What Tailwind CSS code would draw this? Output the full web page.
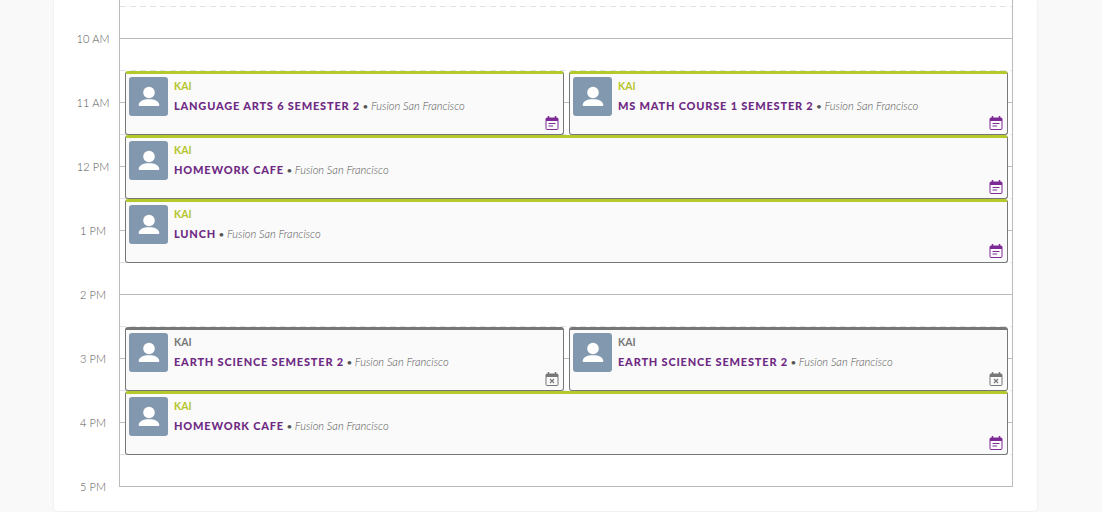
<!DOCTYPE html>
<html>
<head>
  <meta charset="utf-8">
  <script src="https://cdn.jsdelivr.net/npm/@tailwindcss/browser@4"></script>
</head>
<body class="h-[512px] overflow-hidden bg-[#f9f9f9] font-['Lato',sans-serif]">
  <svg class="hidden">
    <symbol id="avatar" viewBox="0 0 39 39">
      <circle cx="20" cy="15.500" r="5.800" fill="#fff"/>
      <path d="M10.500 29a1 1 0 0 1-0.800-1.200c0.500-3.500 4-5.500 10.300-5.500s9.800 2 10.300 5.500a1 1 0 0 1-0.800 1.200z" fill="#fff"/>
    </symbol>
    <symbol id="cal" viewBox="0 0 14 14">
      <path d="M3.500 0v2M10.500 0v2" stroke="currentColor" stroke-width="1.500"/>
      <rect x="1" y="2" width="12" height="11.500" rx="1" fill="#fafafa" stroke="currentColor"/>
      <rect x="1" y="2" width="12" height="3" fill="currentColor"/>
      <path d="M3.500 7.500h7M3.500 10h4.500" stroke="currentColor" stroke-width="1.200"/>
    </symbol>
    <symbol id="cal-x" viewBox="0 0 14 14">
      <path d="M3.500 0v2M10.500 0v2" stroke="currentColor" stroke-width="1.500"/>
      <rect x="1" y="2" width="12" height="11.500" rx="1" fill="#fafafa" stroke="currentColor"/>
      <rect x="1" y="2" width="12" height="3" fill="currentColor"/>
      <path d="M5 7l4 4M9 7l-4 4" stroke="currentColor" stroke-width="1.200"/>
    </symbol>
  </svg>

  <div class="ml-[54px] h-[511px] w-[983px] overflow-hidden rounded-b-[4px] bg-white shadow-[0_0_3px_rgba(0,0,0,0.08)]">
    <div class="flex items-start -translate-y-[26px]">
      <!-- hour labels -->
      <div class="w-[65px] shrink-0 pt-[57px] pl-[13px] text-center text-[11px] leading-[16px] font-light tracking-[0.1px] text-[#555]">
        <div class="h-[64px]">10 AM</div>
        <div class="h-[64px]">11 AM</div>
        <div class="h-[64px]">12 PM</div>
        <div class="h-[64px]">1 PM</div>
        <div class="h-[64px]">2 PM</div>
        <div class="h-[64px]">3 PM</div>
        <div class="h-[64px]">4 PM</div>
        <div class="h-[64px]">5 PM</div>
      </div>

      <!-- grid -->
      <div class="relative w-[894px] shrink-0 border-x border-[#bbb]">
        <div class="h-[65px] border-b border-[#bbb] pt-[32px]"><div class="h-px bg-[repeating-linear-gradient(90deg,#e2e2ea_0,#e2e2ea_6px,transparent_6px,transparent_10px)]"></div></div>
        <div class="h-[64px] border-b border-[#bbb] pt-[31px]"><div class="h-px bg-[repeating-linear-gradient(90deg,#e2e2ea_0,#e2e2ea_6px,transparent_6px,transparent_10px)]"></div></div>
        <div class="h-[64px] border-b border-[#bbb] pt-[31px]"><div class="h-px bg-[repeating-linear-gradient(90deg,#e2e2ea_0,#e2e2ea_6px,transparent_6px,transparent_10px)]"></div></div>
        <div class="h-[64px] border-b border-[#bbb] pt-[31px]"><div class="h-px bg-[repeating-linear-gradient(90deg,#e2e2ea_0,#e2e2ea_6px,transparent_6px,transparent_10px)]"></div></div>
        <div class="h-[64px] border-b border-[#bbb] pt-[31px]"><div class="h-px bg-[repeating-linear-gradient(90deg,#e2e2ea_0,#e2e2ea_6px,transparent_6px,transparent_10px)]"></div></div>
        <div class="h-[64px] border-b border-[#bbb] pt-[31px]"><div class="h-px bg-[repeating-linear-gradient(90deg,#e2e2ea_0,#e2e2ea_6px,transparent_6px,transparent_10px)]"></div></div>
        <div class="h-[64px] border-b border-[#bbb] pt-[31px]"><div class="h-px bg-[repeating-linear-gradient(90deg,#e2e2ea_0,#e2e2ea_6px,transparent_6px,transparent_10px)]"></div></div>
        <div class="h-[64px] border-b border-[#bbb] pt-[31px]"><div class="h-px bg-[repeating-linear-gradient(90deg,#e2e2ea_0,#e2e2ea_6px,transparent_6px,transparent_10px)]"></div></div>

        <!-- events -->
        <div class="absolute top-[97px] left-[5px] flex h-[64px] w-[439px] rounded-[3px] border border-t-[3px] border-[#777] border-t-[#b5c92b] bg-[#fafafa]">
          <svg class="mt-[3px] ml-[3px] h-[39px] w-[39px] shrink-0 rounded-[3px] bg-[#8298ae]"><use href="#avatar"/></svg>
          <div class="ml-[6px]">
            <div class="mt-[5px] text-[10.500px] leading-[14px] font-bold text-[#b5c42b]">KAI</div>
            <div class="mt-[5px] text-[10px] leading-[16px] text-[#555]"><span class="text-[11px] font-black tracking-[0.8px] text-[#6f2a84]">LANGUAGE ARTS 6 SEMESTER 2</span> • <span class="text-[11.100px] font-light italic">Fusion San Francisco</span></div>
          </div>
          <svg class="absolute right-[4px] bottom-[4px] h-[14px] w-[14px] text-[#7d2a96]"><use href="#cal"/></svg>
        </div>
        <div class="absolute top-[97px] left-[449px] flex h-[64px] w-[439px] rounded-[3px] border border-t-[3px] border-[#777] border-t-[#b5c92b] bg-[#fafafa]">
          <svg class="mt-[3px] ml-[3px] h-[39px] w-[39px] shrink-0 rounded-[3px] bg-[#8298ae]"><use href="#avatar"/></svg>
          <div class="ml-[6px]">
            <div class="mt-[5px] text-[10.500px] leading-[14px] font-bold text-[#b5c42b]">KAI</div>
            <div class="mt-[5px] text-[10px] leading-[16px] text-[#555]"><span class="text-[11px] font-black tracking-[0.8px] text-[#6f2a84]">MS MATH COURSE 1 SEMESTER 2</span> • <span class="text-[11.100px] font-light italic">Fusion San Francisco</span></div>
          </div>
          <svg class="absolute right-[4px] bottom-[4px] h-[14px] w-[14px] text-[#7d2a96]"><use href="#cal"/></svg>
        </div>
        <div class="absolute top-[161px] left-[5px] flex h-[64px] w-[883px] rounded-[3px] border border-t-[3px] border-[#777] border-t-[#b5c92b] bg-[#fafafa]">
          <svg class="mt-[3px] ml-[3px] h-[39px] w-[39px] shrink-0 rounded-[3px] bg-[#8298ae]"><use href="#avatar"/></svg>
          <div class="ml-[6px]">
            <div class="mt-[5px] text-[10.500px] leading-[14px] font-bold text-[#b5c42b]">KAI</div>
            <div class="mt-[5px] text-[10px] leading-[16px] text-[#555]"><span class="text-[11px] font-black tracking-[0.8px] text-[#6f2a84]">HOMEWORK CAFE</span> • <span class="text-[11.100px] font-light italic">Fusion San Francisco</span></div>
          </div>
          <svg class="absolute right-[4px] bottom-[4px] h-[14px] w-[14px] text-[#7d2a96]"><use href="#cal"/></svg>
        </div>
        <div class="absolute top-[225px] left-[5px] flex h-[64px] w-[883px] rounded-[3px] border border-t-[3px] border-[#777] border-t-[#b5c92b] bg-[#fafafa]">
          <svg class="mt-[3px] ml-[3px] h-[39px] w-[39px] shrink-0 rounded-[3px] bg-[#8298ae]"><use href="#avatar"/></svg>
          <div class="ml-[6px]">
            <div class="mt-[5px] text-[10.500px] leading-[14px] font-bold text-[#b5c42b]">KAI</div>
            <div class="mt-[5px] text-[10px] leading-[16px] text-[#555]"><span class="text-[11px] font-black tracking-[0.8px] text-[#6f2a84]">LUNCH</span> • <span class="text-[11.100px] font-light italic">Fusion San Francisco</span></div>
          </div>
          <svg class="absolute right-[4px] bottom-[4px] h-[14px] w-[14px] text-[#7d2a96]"><use href="#cal"/></svg>
        </div>
        <div class="absolute top-[353px] left-[5px] flex h-[64px] w-[439px] rounded-[3px] border border-t-[3px] border-[#777] bg-[#fafafa]">
          <svg class="mt-[3px] ml-[3px] h-[39px] w-[39px] shrink-0 rounded-[3px] bg-[#8298ae]"><use href="#avatar"/></svg>
          <div class="ml-[6px]">
            <div class="mt-[5px] text-[10.500px] leading-[14px] font-bold text-[#777]">KAI</div>
            <div class="mt-[5px] text-[10px] leading-[16px] text-[#555]"><span class="text-[11px] font-black tracking-[0.8px] text-[#6f2a84]">EARTH SCIENCE SEMESTER 2</span> • <span class="text-[11.100px] font-light italic">Fusion San Francisco</span></div>
          </div>
          <svg class="absolute right-[4px] bottom-[4px] h-[14px] w-[14px] text-[#777]"><use href="#cal-x"/></svg>
        </div>
        <div class="absolute top-[353px] left-[449px] flex h-[64px] w-[439px] rounded-[3px] border border-t-[3px] border-[#777] bg-[#fafafa]">
          <svg class="mt-[3px] ml-[3px] h-[39px] w-[39px] shrink-0 rounded-[3px] bg-[#8298ae]"><use href="#avatar"/></svg>
          <div class="ml-[6px]">
            <div class="mt-[5px] text-[10.500px] leading-[14px] font-bold text-[#777]">KAI</div>
            <div class="mt-[5px] text-[10px] leading-[16px] text-[#555]"><span class="text-[11px] font-black tracking-[0.8px] text-[#6f2a84]">EARTH SCIENCE SEMESTER 2</span> • <span class="text-[11.100px] font-light italic">Fusion San Francisco</span></div>
          </div>
          <svg class="absolute right-[4px] bottom-[4px] h-[14px] w-[14px] text-[#777]"><use href="#cal-x"/></svg>
        </div>
        <div class="absolute top-[417px] left-[5px] flex h-[64px] w-[883px] rounded-[3px] border border-t-[3px] border-[#777] border-t-[#b5c92b] bg-[#fafafa]">
          <svg class="mt-[3px] ml-[3px] h-[39px] w-[39px] shrink-0 rounded-[3px] bg-[#8298ae]"><use href="#avatar"/></svg>
          <div class="ml-[6px]">
            <div class="mt-[5px] text-[10.500px] leading-[14px] font-bold text-[#b5c42b]">KAI</div>
            <div class="mt-[5px] text-[10px] leading-[16px] text-[#555]"><span class="text-[11px] font-black tracking-[0.8px] text-[#6f2a84]">HOMEWORK CAFE</span> • <span class="text-[11.100px] font-light italic">Fusion San Francisco</span></div>
          </div>
          <svg class="absolute right-[4px] bottom-[4px] h-[14px] w-[14px] text-[#7d2a96]"><use href="#cal"/></svg>
        </div>
      </div>
    </div>
  </div>
</body>
</html>
